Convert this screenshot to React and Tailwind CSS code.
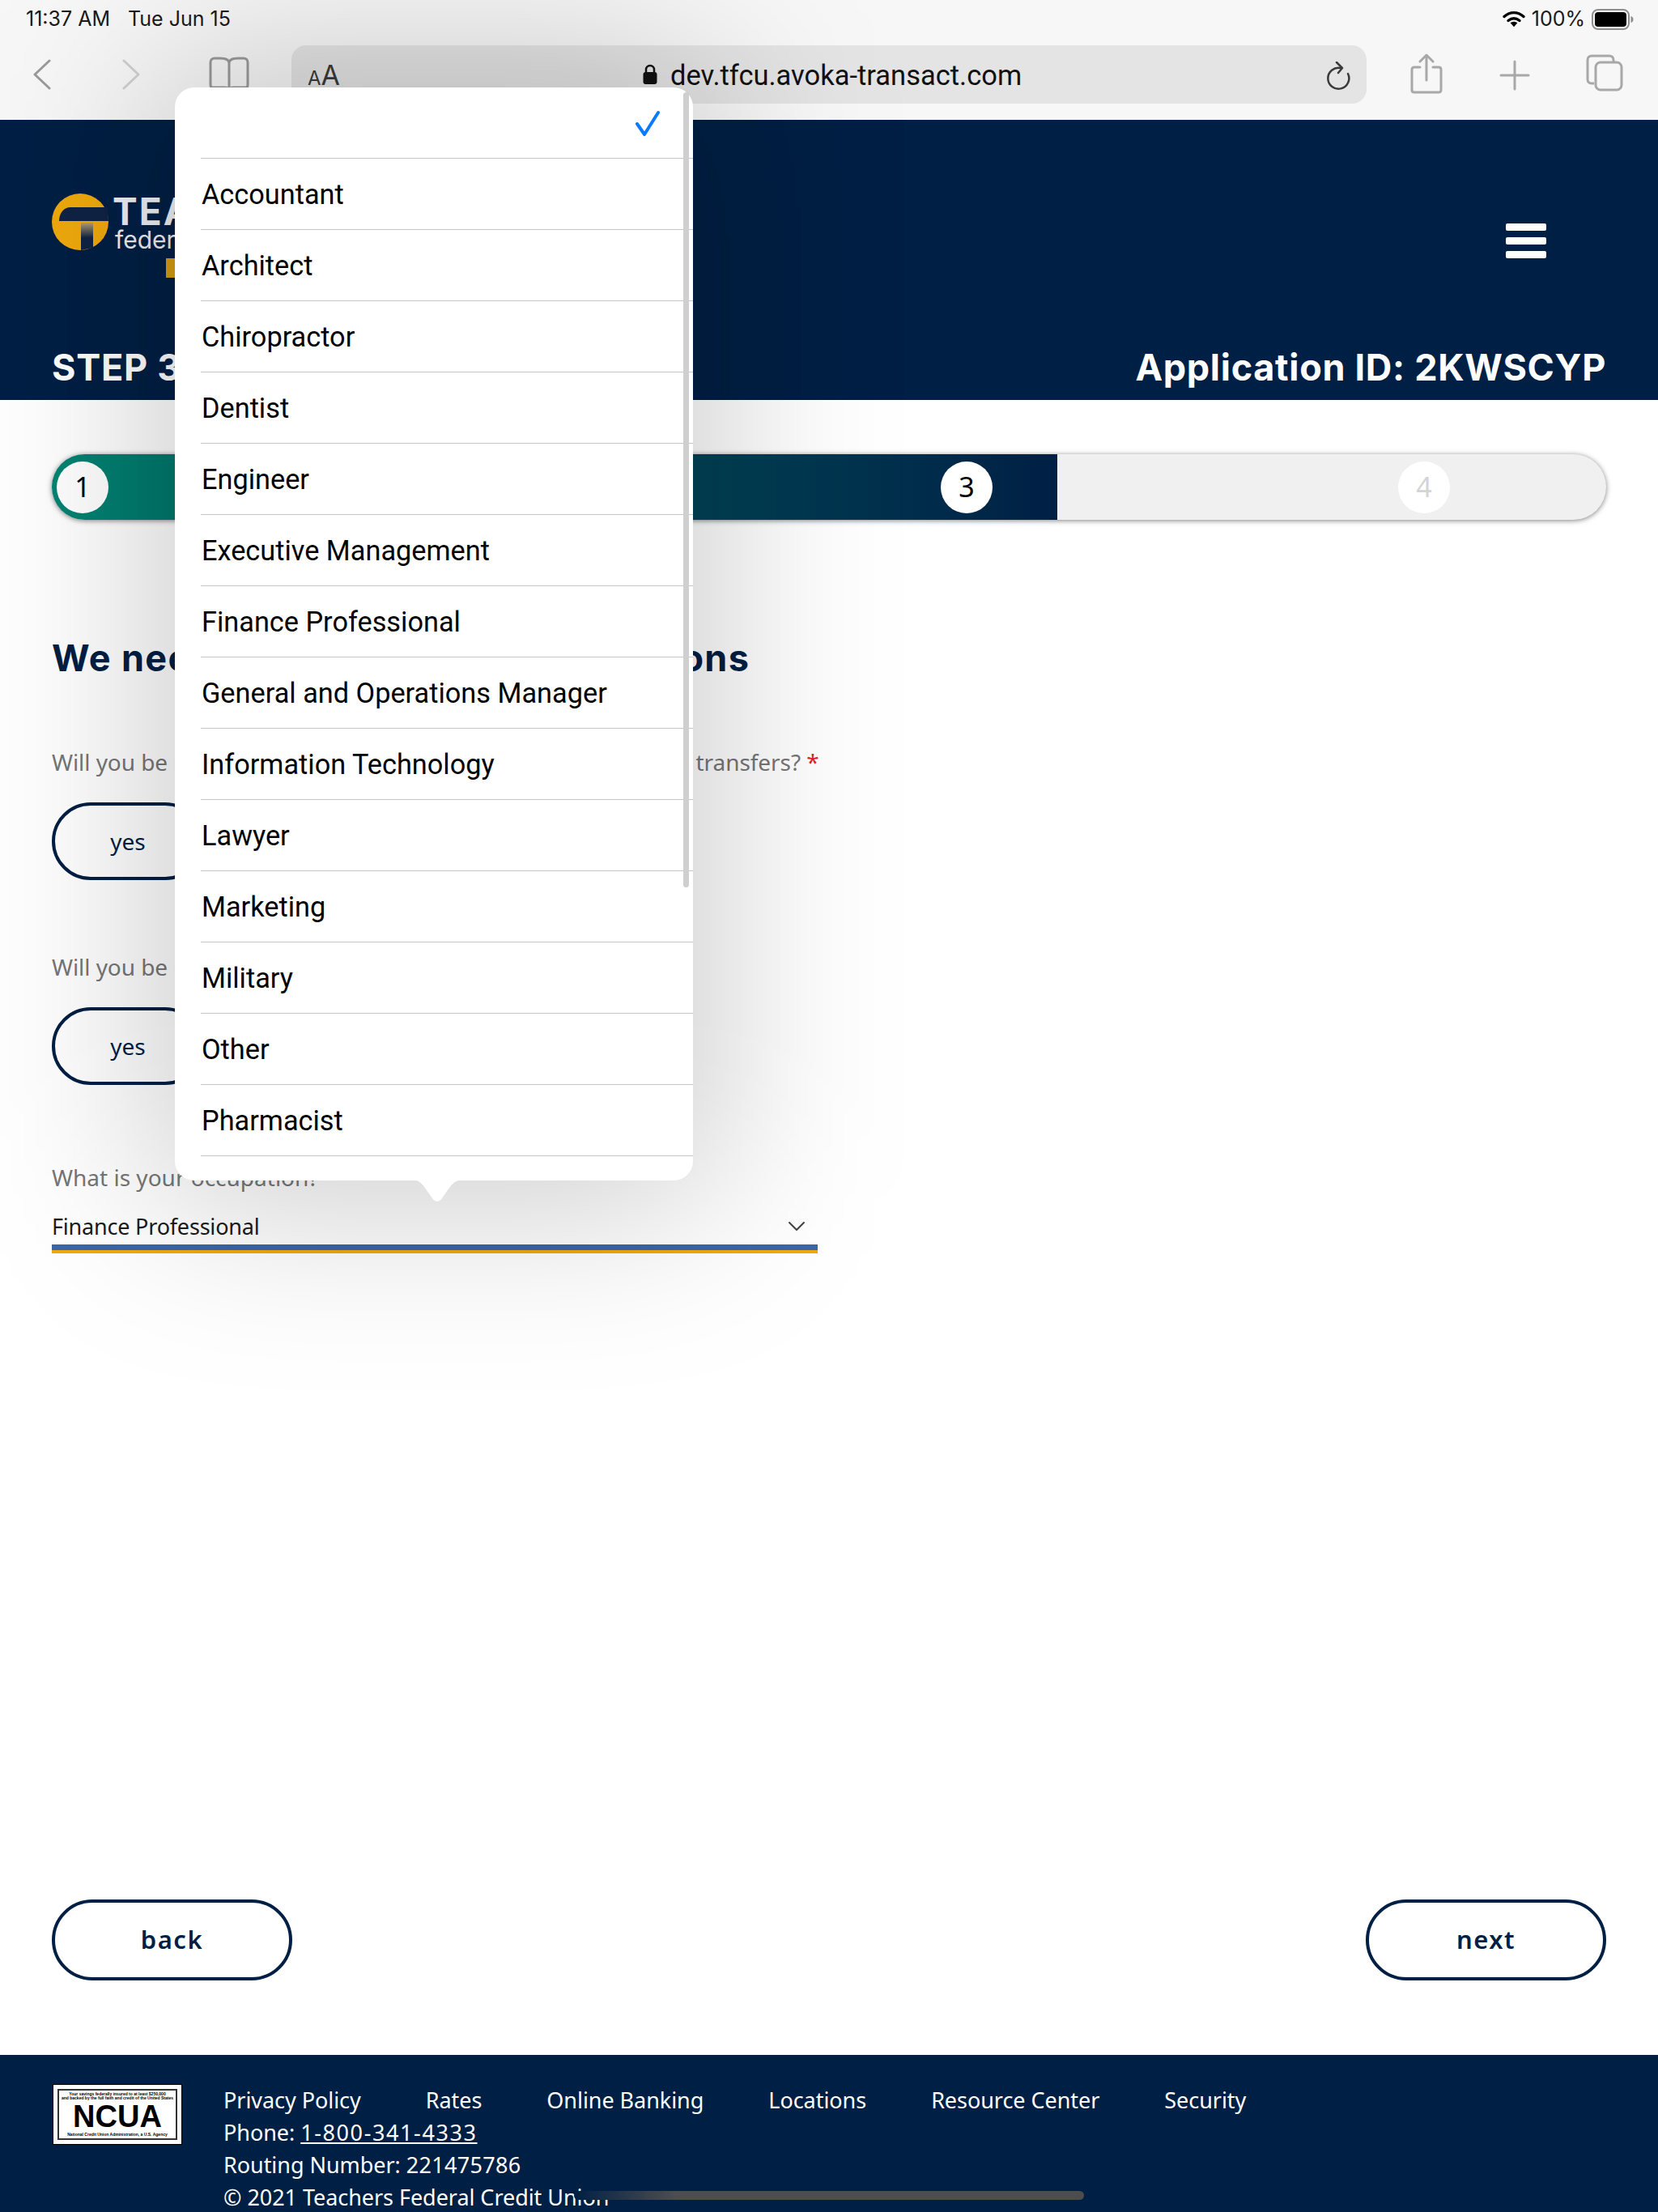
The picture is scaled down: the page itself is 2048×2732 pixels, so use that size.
const OCCUPATIONS = ["Accountant","Architect","Chiropractor","Dentist","Engineer","Executive Management","Finance Professional","General and Operations Manager","Information Technology","Lawyer","Marketing","Military","Other","Pharmacist"];
const FOOTER = ["Privacy Policy","Rates","Online Banking","Locations","Resource Center","Security"];

function StatusBar() {
  return (
    <div className="h-[48px] flex items-center justify-between pl-[32px] pr-[30px] text-[25px] text-[#1a1a1a] font-['Inter',sans-serif]">
      <div className="flex gap-[22px]"><span>11:37 AM</span><span>Tue Jun 15</span></div>
      <div className="flex items-center gap-[8px]">
        <svg width="28" height="22" viewBox="0 0 28 22" fill="none" stroke="#000" strokeWidth="3.4" strokeLinecap="round"><path d="M2 7.5C9.5 1 18.5 1 26 7.5"/><path d="M7 12.5c4.5-3.6 9.5-3.6 14 0"/><path d="M14 19l-3.2-3.6c2-1.2 4.400-1.200 6.400 0z" fill="#000" strokeWidth="1.500"/></svg>
        <span>100%</span>
        <svg width="52" height="26" viewBox="0 0 52 26"><rect x="1" y="1" width="45" height="24" rx="7" fill="none" stroke="#8e8e8e" strokeWidth="2"/><rect x="4" y="4" width="39" height="18" rx="4" fill="#000"/><path d="M48.500 9c2 .5 3 2 3 4s-1 3.500-3 4z" fill="#8e8e8e"/></svg>
      </div>
    </div>
  );
}

function Toolbar() {
  return (
    <div className="h-[100px] relative flex pl-[40px] pt-[8px]">
      <div className="w-[320px] h-[72px] flex items-center shrink-0">
        <svg width="24" height="38" viewBox="0 0 24 38" fill="none" stroke="#9a9a9a" strokeWidth="3" strokeLinecap="round" strokeLinejoin="round"><path d="M21 2 3 19l18 17"/></svg>
        <svg className="ml-[86px]" width="24" height="38" viewBox="0 0 24 38" fill="none" stroke="#d0d0d0" strokeWidth="3" strokeLinecap="round" strokeLinejoin="round"><path d="m3 2 18 17L3 36"/></svg>
        <svg className="ml-[84px]" width="50" height="44" viewBox="0 0 50 44" fill="none" stroke="#9a9a9a" strokeWidth="3"><path d="M25 8C25 3 20 2 14 2H7C4 2 2 4 2 7v28c0 2 1 3 3 3h14c3 0 6 1 6 4 0-3 3-4 6-4h14c2 0 3-1 3-3V7c0-3-2-5-5-5h-7C30 2 25 3 25 8v34"/></svg>
      </div>
      <div className="w-[1328px] h-[72px] rounded-[18px] bg-[#e3e4e3] flex items-center relative shrink-0">
        <span className="ml-[20px] mt-[2px] text-[#3a3a3a] font-['Inter',sans-serif] leading-none"><span className="text-[24px]">A</span><span className="text-[34px]">A</span></span>
        <div className="absolute left-[434px] top-0 h-full flex items-center gap-[16px]">
          <svg width="18" height="26" viewBox="0 0 18 26"><path d="M4 11V7a5 5 0 0 1 10 0v4" fill="none" stroke="#111" strokeWidth="2.500"/><rect x="0.500" y="10" width="17" height="15" rx="3" fill="#111"/></svg>
          <span className="text-[34.5px] text-[#111] font-['Roboto',sans-serif] leading-none mt-[2px]">dev.tfcu.avoka-transact.com</span>
        </div>
        <svg className="absolute right-[18px] top-[20px]" width="34" height="38" viewBox="0 0 34 38" fill="none" stroke="#3a3a3a" strokeWidth="2.500" strokeLinecap="round" strokeLinejoin="round"><path d="M20 8A13 13 0 1 0 29 15"/><path d="m15 1 7 7-5 6"/></svg>
      </div>
      <svg className="ml-[54px] mt-[10px] shrink-0" width="40" height="50" viewBox="0 0 40 50" fill="none" stroke="#a8a8a8" strokeWidth="3" strokeLinecap="round" strokeLinejoin="round"><path d="M12 17H5c-2 0-3 1-3 3v25c0 2 1 3 3 3h30c2 0 3-1 3-3V20c0-2-1-3-3-3h-7"/><path d="M20 33V3"/><path d="m12 10 8-8 8 8"/></svg>
      <svg className="ml-[70px] mt-[18px] shrink-0" width="38" height="38" viewBox="0 0 38 38" fill="none" stroke="#a8a8a8" strokeWidth="3" strokeLinecap="round"><path d="M19 2v34M2 19h34"/></svg>
      <svg className="ml-[69px] mt-[11px] shrink-0" width="46" height="46" viewBox="0 0 46 46" fill="none" stroke="#a8a8a8" strokeWidth="3"><path d="M10 36H7c-3 0-5-2-5-5V7c0-3 2-5 5-5h22c3 0 5 2 5 5v3"/><rect x="12" y="10" width="32" height="34" rx="6"/></svg>
    </div>
  );
}

function Logo() {
  return (
    <div className="flex items-start gap-[5px]">
      <svg width="70" height="70" viewBox="0 0 70 70">
        <defs><linearGradient id="stem" x1="0" y1="0" x2="0" y2="1"><stop offset="0" stopColor="#b89f72"/><stop offset="0.55" stopColor="#0f2345"/></linearGradient></defs>
        <circle cx="35" cy="35" r="35" fill="#f0aa0c"/>
        <path d="M9 34c0-10 6-17 14-17h46l1 17z" fill="#0f2345"/>
        <path d="M36 36h15v31l-15 3z" fill="url(#stem)"/>
      </svg>
      <div className="font-['Inter',sans-serif] text-[#eef0f3]">
        <div className="text-[46px] font-bold leading-[44px] tracking-[2px]">TEACHERS</div>
        <div className="text-[30px] leading-[26px] ml-[3px]">federal credit union</div>
      </div>
    </div>
  );
}

function Header() {
  return (
    <header className="h-[346px] bg-[#001f44] px-[64px] relative flex flex-col font-['Inter',sans-serif] text-white">
      <div className="h-[280px] pt-[91px] flex justify-between">
        <div className="relative h-fit">
          <Logo />
          <div className="absolute left-[141px] top-[80px] w-[60px] h-[24px] bg-[#d99e12]" />
        </div>
        <div className="flex flex-col gap-[8px] mt-[37px] mr-[74px]">
          <div className="w-[50px] h-[9px] rounded-[2px] bg-white" />
          <div className="w-[50px] h-[9px] rounded-[2px] bg-white" />
          <div className="w-[50px] h-[9px] rounded-[2px] bg-white" />
        </div>
      </div>
      <div className="flex justify-between text-[45px] font-bold leading-[52px] tracking-[0.7px]">
        <span>STEP 3 OF 4</span>
        <span>Application ID: 2KWSCYP</span>
      </div>
    </header>
  );
}

function Circle({ n, dim }) {
  return <div className={`w-[64px] h-[64px] rounded-full bg-white flex items-center justify-center text-[34px] font-['Noto_Sans',sans-serif] ${dim ? "text-[#d4d4d4]" : "text-black"}`}>{n}</div>;
}

function Progress() {
  return (
    <div className="mt-[67px] mx-[64px] h-[81px] rounded-full bg-[#f0f0f0] shadow-[0_1px_6px_rgba(0,0,0,0.5)] flex">
      <div className="w-[1242px] rounded-l-full bg-gradient-to-r from-[#008573] to-[#001f44] flex items-center justify-between pl-[6px] pr-[80px]">
        <Circle n="1" /><Circle n="2" /><Circle n="3" />
      </div>
      <div className="flex-1 flex items-center pl-[421px]"><Circle n="4" dim /></div>
    </div>
  );
}

function Question({ children, req }) {
  return (
    <div>
      <div className="text-[28px] leading-[38px] tracking-[-0.07px] text-[#767676] whitespace-nowrap">{children}{req && <span className="text-[#e0202a]"> *</span>}</div>
      <div className="mt-[31px] flex gap-[20px]">
        {["yes","no"].map(t => <button key={t} className="w-[188px] h-[96px] rounded-full border-[4px] border-[#001f44] text-[28px] text-[#001f44]">{t}</button>)}
      </div>
    </div>
  );
}

function Form() {
  return (
    <main className="flex-1 flex flex-col px-[64px] font-['Noto_Sans',sans-serif]">
      <h1 className="mt-[143px] text-[45px] leading-[56px] font-bold tracking-[1.35px] text-[#001f44] font-['Inter',sans-serif] whitespace-nowrap">We need to ask a few more questions</h1>
      <div className="w-[946px]">
        <div className="mt-[81px]"><Question req>Will you be using this account for incoming or outgoing wire transfers?</Question></div>
        <div className="mt-[88px]"><Question>Will you be using this account for ACH?</Question></div>
        <div className="mt-[95px] text-[28px] leading-[38px] text-[#767676]">What is your occupation?</div>
        <div className="mt-[20px] h-[44px] flex items-center justify-between text-[27px] tracking-[-0.2px] text-[#1a1a1a] pr-[15px]">
          <span>Finance Professional</span>
          <svg width="22" height="14" viewBox="0 0 22 14" fill="none" stroke="#444" strokeWidth="2" strokeLinecap="round" strokeLinejoin="round"><path d="m2 2 9 9 9-9"/></svg>
        </div>
        <div className="h-[7px] bg-[#3c66a6]" />
        <div className="h-[4px] bg-[#f0aa0c]" />
      </div>
      <div className="mt-auto mb-[92px] flex justify-between">
        {["back","next"].map(t => <button key={t} className="w-[297px] h-[100px] pb-[2px] rounded-full border-[4px] border-[#001f44] text-[31px] font-semibold tracking-[1.5px] text-[#001f44]">{t}</button>)}
      </div>
    </main>
  );
}

function Footer() {
  return (
    <footer className="h-[194px] bg-[#001f44] pl-[65px] pt-[36px] flex gap-[51px] text-white text-[27px] tracking-[-0.05px] leading-[40px] font-['Noto_Sans',sans-serif] overflow-hidden">
      <div className="w-[160px] h-[75px] bg-white border border-black p-[5px] shrink-0">
        <div className="h-full border-[2px] border-[#333] flex flex-col items-center justify-between py-[2px] text-black font-['Liberation_Sans',sans-serif] leading-none tracking-normal">
          <div className="text-[5px] text-center font-bold whitespace-nowrap">Your savings federally insured to at least $250,000<br />and backed by the full faith and credit of the United States</div>
          <div className="text-[38px] font-bold leading-[30px]">NCUA</div>
          <div className="text-[5px] font-bold whitespace-nowrap">National Credit Union Administration, a U.S. Agency</div>
        </div>
      </div>
      <div>
        <div className="flex gap-[80px]">{FOOTER.map(t => <span key={t}>{t}</span>)}</div>
        <div>Phone: <span className="underline tracking-[1.6px]">1-800-341-4333</span></div>
        <div>Routing Number: <span className="tracking-[0.3px]">221475786</span></div>
        <div>© 2021 Teachers Federal Credit Union</div>
      </div>
    </footer>
  );
}

function Popover() {
  return (
    <div className="absolute left-[216px] top-[108px] w-[640px] h-[1350px] z-10">
      <div className="absolute -inset-[30px] rounded-[60px] bg-black/20 blur-[110px]" />
      <div className="relative h-full rounded-[24px] bg-white overflow-hidden pl-[32px] font-['Roboto',sans-serif] text-[34.3px] text-black">
        <div className="h-[88px] border-b border-[#c6c6c8] flex items-center justify-end pr-[40px]">
          <svg width="32" height="32" viewBox="0 0 32 32" fill="none" stroke="#0a7aff" strokeWidth="4" strokeLinecap="round" strokeLinejoin="round"><path d="m3 17 9 13L29 3"/></svg>
        </div>
        {OCCUPATIONS.map(o => <div key={o} className="h-[88px] border-b border-[#c6c6c8] flex items-center pl-[1px] pt-[3px]">{o}</div>)}
      </div>
      <div className="absolute right-[5px] top-[6px] w-[7px] h-[982px] rounded-full bg-[#cfcfcf]" />
      <svg className="absolute left-[290px] top-[1349px]" width="68" height="28" viewBox="0 0 68 28"><path d="M0 0c14 0 16 6 28 23 3 5 9 5 12 0C52 6 54 0 68 0z" fill="#fff"/></svg>
    </div>
  );
}

export default function App() {
  return (
    <div className="relative h-[2732px] flex flex-col bg-white overflow-hidden">
      <div className="bg-[#f7f7f7]"><StatusBar /><Toolbar /></div>
      <Header />
      <Progress />
      <Form />
      <Footer />
      <Popover />
      <div className="absolute left-[709px] top-[2706px] w-[630px] h-[11px] rounded-full bg-gradient-to-r from-[#001f44] via-[#4d4d4d] via-20% to-[#4d4d4d] z-10" />
    </div>
  );
}
